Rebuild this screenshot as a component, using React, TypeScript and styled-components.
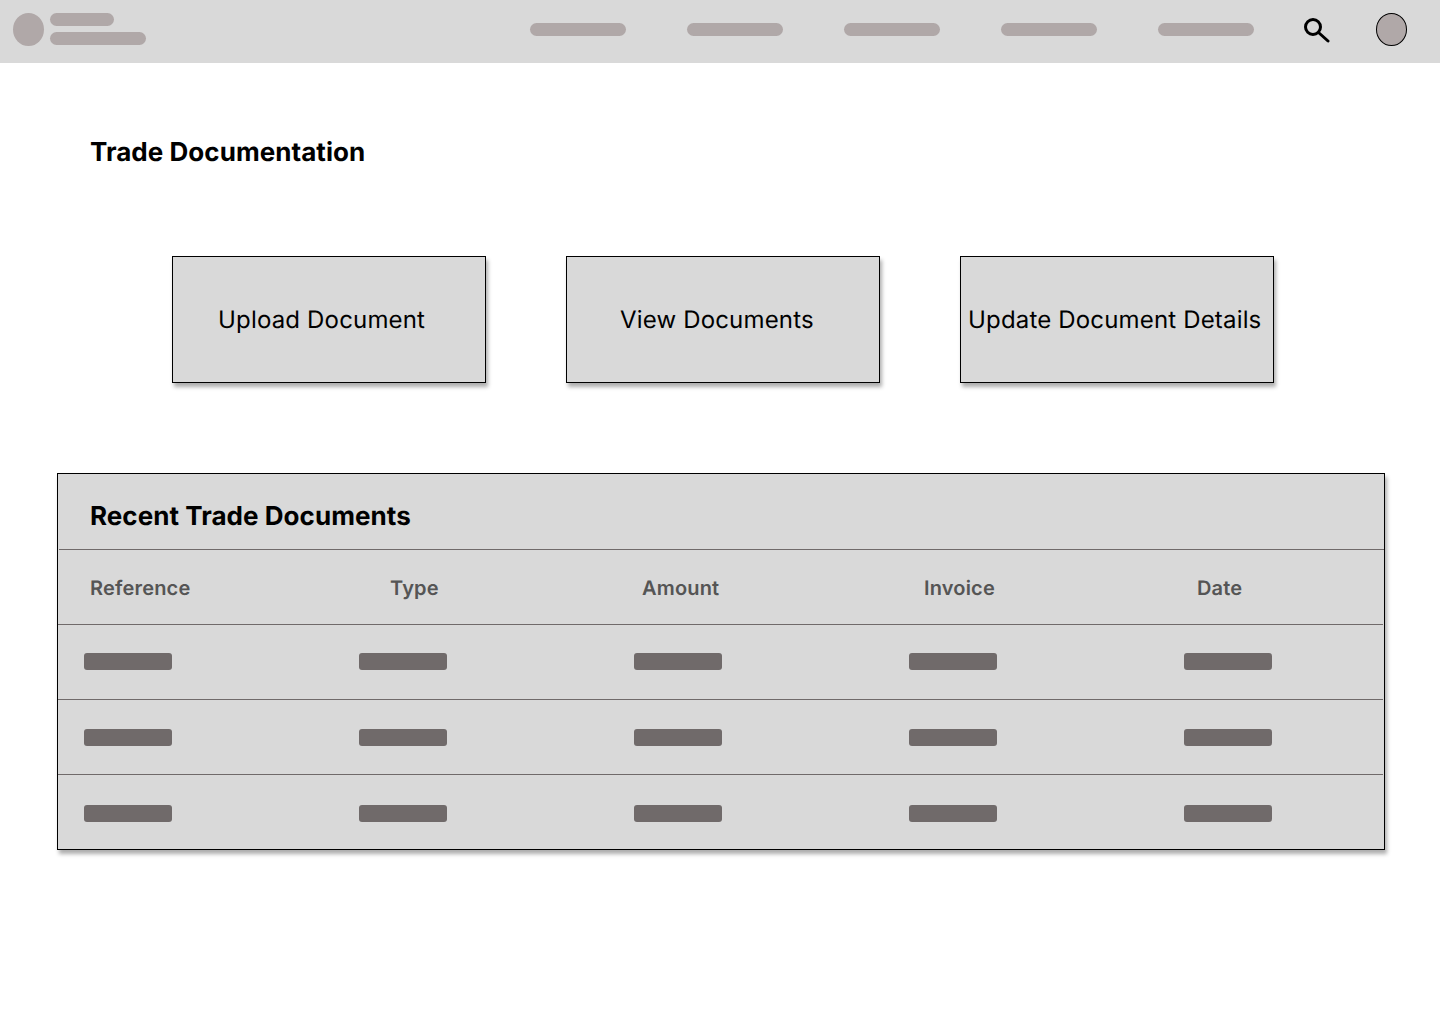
import React from "react";
import styled, { createGlobalStyle } from "styled-components";

const Global = createGlobalStyle`
  html, body { margin: 0; padding: 0; background: #fff; }
  body {
    font-family: Inter, "Liberation Sans", sans-serif;
    text-rendering: geometricPrecision;
    color: #000;
  }
  * { box-sizing: border-box; }
`;

const Page = styled.div`
  width: 1440px;
  height: 1024px;
  overflow: hidden;
  background: #fff;
`;

const Header = styled.header`
  height: 63px;
  background: #d9d9d9;
  display: flex;
  align-items: center;
  padding: 0 33px 4px 13px;
`;

const LogoMark = styled.div`
  width: 31px;
  height: 33px;
  border-radius: 50%;
  background: #b0a8a8;
`;

const LogoText = styled.div`
  display: flex;
  flex-direction: column;
  gap: 6px;
  padding-bottom: 1px;
  margin-left: 6px;
`;

const Pill = styled.div<{ $w: number }>`
  width: ${(p) => p.$w}px;
  height: 13px;
  border-radius: 6.5px;
  background: #b0a8a8;
`;

const Nav = styled.nav`
  display: flex;
  gap: 61px;
  margin-left: auto;
`;

const SearchIcon = styled.svg`
  width: 28px;
  height: 29px;
  margin-left: 48px;
  flex: none;
`;

const Avatar = styled.div`
  width: 31px;
  height: 33px;
  border-radius: 50%;
  background: #b0a8a8;
  border: 1px solid #000;
  margin-left: 46px;
`;

const Title = styled.h1`
  margin: 0;
  padding: 74px 0 0 90px;
  font-size: 26px;
  line-height: 32px;
  font-weight: 700;
  letter-spacing: 0.05px;
`;

const Actions = styled.section`
  display: flex;
  gap: 80px;
  padding: 87px 0 0 172px;
`;

const ActionCard = styled.div<{ $indent: number }>`
  width: 314px;
  height: 127px;
  background: #d9d9d9;
  border: 1px solid #000;
  box-shadow: 2px 4px 4px rgba(0, 0, 0, 0.32);
  display: flex;
  align-items: center;
  padding-left: ${(p) => p.$indent}px;
  font-size: 24px;
  line-height: 30px;
  letter-spacing: 0.17px;
  white-space: nowrap;
`;

const Table = styled.section`
  width: 1328px;
  height: 377px;
  margin: 90px 0 0 57px;
  background: #d9d9d9;
  border: 1px solid #000;
  box-shadow: 2px 4px 4px rgba(0, 0, 0, 0.32);
  display: flex;
  flex-direction: column;
`;

const TableTitle = styled.h2`
  margin: 0;
  height: 75px;
  padding: 10px 0 0 32px;
  display: flex;
  align-items: center;
  font-size: 26px;
  font-weight: 700;
  letter-spacing: 0.05px;
`;

const Row = styled.div<{ $top?: number; $bottom?: number }>`
  height: 75px;
  flex: none;
  border-top: 1px solid #706a6a;
  display: grid;
  grid-template-columns: repeat(5, 275px);
  align-items: center;
  margin-right: 1px;
  padding: ${(p) => p.$top ?? 0}px 0 ${(p) => p.$bottom ?? 0}px 26px;
`;

const HeaderRow = styled(Row)`
  margin: 0 0 0 1px;
  padding-left: 25px;
`;

const HeaderCell = styled.div<{ $indent: number }>`
  padding-left: ${(p) => p.$indent}px;
  font-size: 20px;
  font-weight: 600;
  letter-spacing: 0.18px;
  color: #555;
`;

const Bar = styled.div`
  width: 88px;
  height: 17px;
  border-radius: 3px;
  background: #706a6a;
`;

const columns: [string, number][] = [
  ["Reference", 6],
  ["Type", 31],
  ["Amount", 8],
  ["Invoice", 15],
  ["Date", 13],
];

const BarRow = ({ top, bottom }: { top?: number; bottom?: number }) => (
  <Row $top={top} $bottom={bottom}>
    {columns.map(([c]) => (
      <Bar key={c} />
    ))}
  </Row>
);

export default function App() {
  return (
    <Page>
      <Global />
      <Header>
        <LogoMark />
        <LogoText>
          <Pill $w={64} />
          <Pill $w={96} />
        </LogoText>
        <Nav>
          {[0, 1, 2, 3, 4].map((i) => (
            <Pill key={i} $w={96} />
          ))}
        </Nav>
        <SearchIcon viewBox="0 0 28 29" fill="none" stroke="#000" strokeWidth="3">
          <circle cx="11" cy="12" r="7.5" />
          <path d="M16.5 17.5 L26 26" strokeLinecap="round" />
        </SearchIcon>
        <Avatar />
      </Header>
      <Title>Trade Documentation</Title>
      <Actions>
        <ActionCard $indent={45}>Upload Document</ActionCard>
        <ActionCard $indent={53}>View Documents</ActionCard>
        <ActionCard $indent={7}>Update Document Details</ActionCard>
      </Actions>
      <Table>
        <TableTitle>Recent Trade Documents</TableTitle>
        <HeaderRow $top={2}>
          {columns.map(([c, indent]) => (
            <HeaderCell key={c} $indent={indent}>
              {c}
            </HeaderCell>
          ))}
        </HeaderRow>
        <BarRow bottom={1} />
        <BarRow />
        <BarRow top={3} />
      </Table>
    </Page>
  );
}
